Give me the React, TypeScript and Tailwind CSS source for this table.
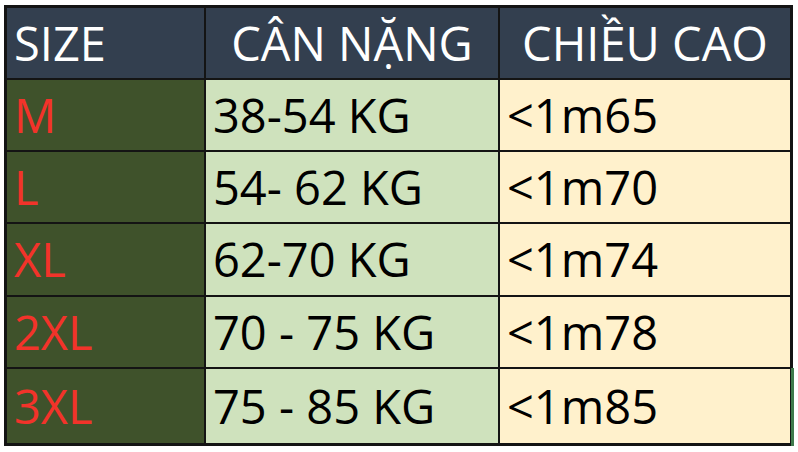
import React from 'react';

type Row = { size: string; weight: string; height: string };

const rows: Row[] = [
  { size: 'M', weight: '38-54 KG', height: '<1m65' },
  { size: 'L', weight: '54- 62 KG', height: '<1m70' },
  { size: 'XL', weight: '62-70 KG', height: '<1m74' },
  { size: '2XL', weight: '70 - 75 KG', height: '<1m78' },
  { size: '3XL', weight: '75 - 85 KG', height: '<1m85' },
];

const rowHeights = ['h-[70px]', 'h-[70px]', 'h-[71px]', 'h-[70px]', 'h-[74px]'];

export default function App() {
  return (
    <div
      className="h-[452px] w-[798px] overflow-hidden bg-white pl-[4px] pt-[5px]"
      style={{ fontFamily: '"Open Sans", "Noto Sans", sans-serif' }}
    >
      <div className="relative w-[789px]">
        <div className="grid grid-cols-[197px_292px_290px] gap-[2px] border-[3px] border-[#141414] bg-[#141414] text-[47px] leading-none">
          <div className="flex h-[70px] items-center bg-[#333f4f] pl-[7px] text-white">SIZE</div>
          <div className="flex h-[70px] items-center justify-center bg-[#333f4f] text-white">CÂN NẶNG</div>
          <div className="flex h-[70px] items-center justify-center bg-[#333f4f] text-white">CHIỀU CAO</div>

          {rows.map((r, i) => (
            <React.Fragment key={r.size}>
              <div className={`flex ${rowHeights[i]} items-center bg-[#3f522b] pl-[7px] text-[#f2332a]`}>
                {r.size}
              </div>
              <div className={`flex ${rowHeights[i]} items-center bg-[#cfe2bd] pl-[7px] text-black`}>
                {r.weight}
              </div>
              <div className={`flex ${rowHeights[i]} items-center bg-[#fff1cc] pl-[7px] text-black`}>
                {r.height}
              </div>
            </React.Fragment>
          ))}
        </div>
        {/* selected-cell edge */}
        <div className="absolute bottom-0 right-[-1px] h-[78px] w-[3px] bg-[#3f7a4c]" />
      </div>
    </div>
  );
}
